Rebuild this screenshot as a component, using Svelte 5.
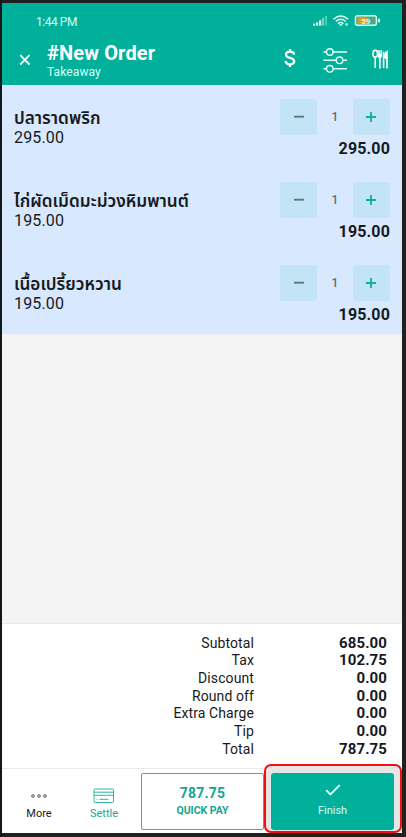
<script>
  const items = [
    { name: 'ปลาราดพริก', price: '295.00' },
    { name: 'ไก่ผัดเม็ดมะม่วงหิมพานต์', price: '195.00' },
    { name: 'เนื้อเปรี้ยวหวาน', price: '195.00' },
  ];
  const totals = [
    ['Subtotal', '685.00'],
    ['Tax', '102.75'],
    ['Discount', '0.00'],
    ['Round off', '0.00'],
    ['Extra Charge', '0.00'],
    ['Tip', '0.00'],
    ['Total', '787.75'],
  ];
</script>

<div class="frame">
  <div class="screen">
    <header>
      <div class="status">
        <span class="time">1:44 PM</span>
        <svg class="signals" width="70" height="14" viewBox="0 0 70 14" fill="none">
          <g fill="#d9fff5">
            <rect x="2" y="9.600" width="2.200" height="2" />
            <rect x="5" y="8.300" width="2.200" height="3.300" />
            <rect x="8" y="6.300" width="2.200" height="5.300" />
            <rect x="11" y="4" width="2" height="7.600" opacity=".5" />
            <rect x="14" y="2" width="2" height="9.600" opacity=".35" />
          </g>
          <g stroke="#d9fff5" stroke-width="1.500">
            <path d="M22.500 5.200Q29.800 -1.200 37.100 5.200" />
            <path d="M24.800 7.500Q29.800 3 34.800 7.500" />
            <path d="M27 9.700Q29.800 7 32.500 9.700" />
          </g>
          <path d="M27.800 10.200h4l-2 2z" fill="#d9fff5" />
          <circle cx="35.500" cy="10.500" r="1.400" fill="#a9eadd" />
          <rect x="44.400" y="1.700" width="21" height="9.600" rx="2" fill="#4aa98a" stroke="#d9fff5" stroke-width="1.400" />
          <rect x="46.200" y="3.300" width="10" height="6.400" fill="#e09b22" />
          <rect x="67" y="4.500" width="2" height="4" rx="1" fill="#d9fff5" />
          <text x="54.800" y="9.500" text-anchor="middle" fill="#f2f5cf" font-size="8" font-weight="700">59</text>
        </svg>
      </div>
      <div class="bar">
        <svg class="close" width="12" height="12" viewBox="0 0 12 12"><path d="M1.200 1.200l9.300 9.300M10.500 1.200l-9.300 9.300" stroke="#effffb" stroke-width="1.800" /></svg>
        <div class="title">
          <h1>#New Order</h1>
          <p>Takeaway</p>
        </div>
        <svg class="dollar" width="12" height="20" viewBox="0 0 12 20" fill="none" stroke="#fff" stroke-width="2.200">
          <path d="M10.200 6.600C9.900 4.700 8.300 3.700 6 3.700C3.600 3.700 2 4.900 2 6.700C2 8.600 3.600 9.300 6 9.900C8.600 10.600 10.200 11.400 10.200 13.300C10.200 15.300 8.500 16.300 6.100 16.300C3.500 16.300 1.700 15.100 1.500 12.900M6 1v3M6 16v3" />
        </svg>
        <svg class="sliders" width="24" height="26" viewBox="0 0 24 26" fill="none" stroke="#e2fff8" stroke-width="1.400">
          <path d="M.5 5H3.300M10.300 5H24M.5 13.300H13M20 13.300H24M.5 21.800H3.300M10.300 21.800H24" />
          <circle cx="6.800" cy="5" r="3.300" /><circle cx="16.500" cy="13.300" r="3.300" /><circle cx="6.800" cy="21.800" r="3.300" />
        </svg>
        <svg class="cutlery" width="16" height="20" viewBox="0 0 16 20">
          <ellipse cx="3.200" cy="4.700" rx="2.300" ry="3.500" fill="none" stroke="#fff" stroke-width="1.500" />
          <path d="M2.400 7.500h1.600V19H2.400z" fill="#fff" />
          <path d="M5.600 1h1.100v3.500h.5V1h1.200v3.500h.5V1h1.200v5.500Q10 8.500 8.700 9V19.500H7V9Q5.600 8.500 5.600 6.500z" fill="#fff" />
          <path d="M15.800 1V19.500H14.200V10.500L12.400 9V19H10.800V5L11 1.500L12.300 5L13.300 1.500L14 4Q14.500 1.600 15.800 1z" fill="#fff" />
        </svg>
      </div>
    </header>

    <main>
      {#each items as item}
        <section class="item">
          <div class="desc">
            <div class="name">{item.name}</div>
            <div class="price">{item.price}</div>
          </div>
          <div class="side">
            <div class="stepper">
              <button aria-label="Decrease"><svg width="12" height="12" viewBox="0 0 12 12"><path d="M1 5.700h10" stroke="#63777b" stroke-width="1.900" /></svg></button>
              <span>1</span>
              <button aria-label="Increase"><svg width="12" height="12" viewBox="0 0 12 12"><path d="M1 6h10M6 1v10" stroke="#13b09c" stroke-width="1.900" /></svg></button>
            </div>
            <div class="amount">{item.price}</div>
          </div>
        </section>
      {/each}
    </main>

    <div class="totals">
      {#each totals as [label, value]}
        <div class="line"><span>{label}</span><b>{value}</b></div>
      {/each}
    </div>

    <footer>
      <div class="tab more">
        <svg width="18" height="6" viewBox="0 0 18 6" fill="#aaa" stroke="#777" stroke-width=".8"><circle cx="3" cy="3" r="1.500" /><circle cx="9" cy="3" r="1.500" /><circle cx="15" cy="3" r="1.500" /></svg>
        <span>More</span>
      </div>
      <div class="tab settle">
        <svg width="22" height="16" viewBox="0 0 22 16" fill="none" stroke="#2eb5a1"><rect x="1" y="1" width="19.500" height="13.500" rx="1.200" /><path d="M1 4.200h19.500M1 7.300h19.500M3.500 11.300h1M6.500 11.300h9" /></svg>
        <span>Settle</span>
      </div>
      <div class="quick"><b>787.75</b><span>QUICK PAY</span></div>
      <div class="highlight">
        <div class="finish">
          <svg width="16" height="12" viewBox="0 0 16 12"><path d="M1.200 6.200L5.400 10.400L14.700 1.200" fill="none" stroke="#effffb" stroke-width="1.800" /></svg>
          <span>Finish</span>
        </div>
      </div>
    </footer>
  </div>
</div>

<style>
  :global(body) { background: #202020; }
  .frame, .frame * { box-sizing: border-box; }
  .frame {
    width: 406px; height: 837px; padding: 3px 4px 4px 2px; overflow: hidden;
    background: linear-gradient(90deg, #10181a 0 2px, #202020 2px);
    font-family: Roboto, "Noto Sans Thai", "Noto Sans", sans-serif; color: #171a1d;
  }
  .screen { width: 400px; height: 830px; display: flex; flex-direction: column; background: #f3f3f3; }
  h1, p { margin: 0; }
  header { height: 81.5px; flex: none; background: #00b09b; color: #fff; border-bottom: 1px solid #0aa996; }
  .status { height: 36px; padding: 11px 21px 0 34px; display: flex; justify-content: space-between; }
  .time { font-size: 12px; line-height: 16px; letter-spacing: -.45px; color: #d8fff5; }
  .bar { display: flex; align-items: flex-start; height: 45px; }
  .close { margin: 15px 0 0 17px; }
  .title { margin-left: 16px; width: 190px; }
  h1 { font-size: 20px; line-height: 24px; margin-top: 2px; font-weight: 700; letter-spacing: .15px; white-space: nowrap; }
  p { font-size: 12px; line-height: 14px; letter-spacing: .1px; color: #d8fff5; }
  .dollar { margin: 9px 0 0 47px; }
  .sliders { margin: 8px 0 0 27px; }
  .cutlery { margin: 10px 0 0 25px; }
  main { flex: 1; }
  .item { height: 83px; display: flex; justify-content: space-between; background: #d8e8fe; padding: 14px 12px 0 12px; border-bottom: 1px solid #d9e5f7; }
  .name { margin-top: 9px; font-size: 17.200px; line-height: 20px; font-weight: 600; white-space: nowrap; height: 20px; }
  .price { font-size: 16px; line-height: 20px; letter-spacing: .15px; }
  .side { width: 110px; }
  .stepper { display: flex; justify-content: space-between; align-items: center; }
  button { width: 37px; height: 36px; border: 0; padding: 0; border-radius: 3px; background: #c3e4f5; display: flex; align-items: center; justify-content: center; }
  .stepper span { font-size: 12px; font-weight: 500; color: #616a73; }
  .amount { text-align: right; font-size: 16px; line-height: 20px; margin-top: 4px; font-weight: 700; letter-spacing: .15px; }
  .totals { height: 145px; background: #fff; border-top: 1px solid #e9e9e9; padding: 10.5px 15px 0 0; }
  .line { display: flex; height: 17.7px; line-height: 17.7px; justify-content: flex-end; font-size: 14px; letter-spacing: .1px; }
  .line b { width: 133px; text-align: right; font-size: 15px; }
  footer { height: 65px; border-top: 1px solid #e9e9e9; background: #fff; display: flex; align-items: flex-start; }
  .tab { display: flex; flex-direction: column; align-items: center; font-size: 11px; line-height: 14px; }
  .more { width: 74px; padding-top: 24px; }
  .more span { margin-top: 8px; }
  .settle { width: 56px; padding-top: 19px; color: #13a693; }
  .settle span { margin-top: 3px; }
  .quick { width: 123px; height: 57px; margin: 4px 0 0 9px; border: 1px solid #35b5a3; border-radius: 2px; display: flex; flex-direction: column; align-items: center; color: #13a693; padding-top: 10px; }
  .quick b { font-size: 14px; line-height: 18px; letter-spacing: .2px; }
  .quick span { font-size: 10.500px; line-height: 16px; margin-top: 1px; font-weight: 700; }
  .highlight { width: 138px; height: 69px; margin-top: -5px; margin-right: -1px; border: 2px solid #f40e12; border-radius: 7px; background: #e6e6e6; padding: 7px 6px 0 5px; flex: none; position: relative; }
  .finish { height: 57px; background: #00b09b; border-radius: 3px; display: flex; flex-direction: column; align-items: center; color: #d8fff5; font-size: 11px; line-height: 14px; padding-top: 11px; }
  .finish span { margin-top: 8px; }
</style>
